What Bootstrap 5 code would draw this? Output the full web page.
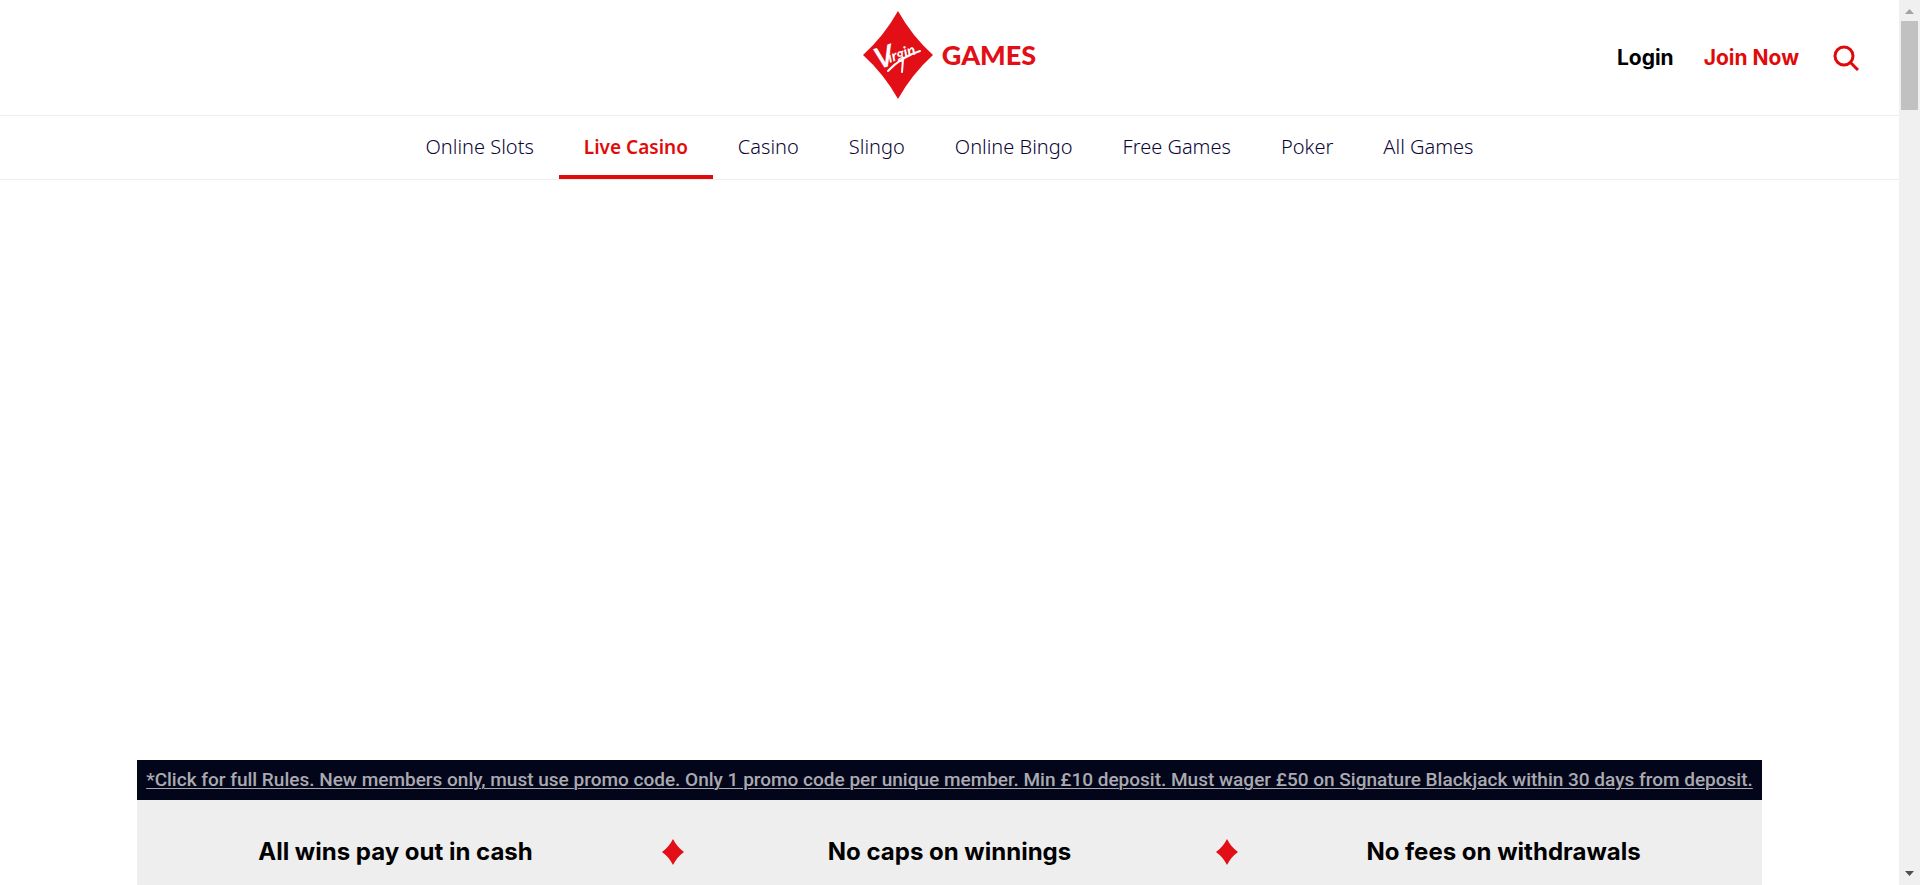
<!DOCTYPE html>
<html lang="en">
<head>
<meta charset="utf-8">
<meta name="viewport" content="width=device-width, initial-scale=1">
<title>Live Casino | Virgin Games</title>
<link href="https://cdn.jsdelivr.net/npm/bootstrap@5.3.0/dist/css/bootstrap.min.css" rel="stylesheet">
<style>
  :root { --brand: #e10a0a; --ink: #0c0636; --line: #eee; }
  body { font-family: "Noto Sans", "Open Sans", sans-serif; color: #000; background: #fff; }
  a { text-decoration: none; }

  .top-bar { min-height: 116px; padding: 0 40px; border-bottom: 1px solid var(--line); }
  .brand-link { padding-bottom: 5px; }
  .brand-mark { width: 70px; height: 88px; }
  .brand-name { padding-left: 9px; font: 900 27px/36px Lato, sans-serif; color: #e20f17; }
  .brand-script { font-family: Lato, sans-serif; font-style: italic; font-weight: 700; fill: #fff; }
  .account { gap: 30px; font: 700 21px/28px Inter, sans-serif; }
  .account a { color: #000; }
  .account .join { color: var(--brand); }
  .search-btn { width: 26px; height: 26px; }

  .game-nav { min-height: 64px; border-bottom: 1px solid var(--line); }
  .game-nav a { display: block; padding: 17px 25px 14px; border-bottom: 4px solid transparent;
    font-size: 20px; line-height: 28px; font-weight: 300; color: var(--ink); }
  .game-nav a.active { font-size: 19px; font-weight: 600; color: var(--brand); border-bottom-color: var(--brand); }

  .hero-space { height: 580px; }
  .promo { max-width: 1625px; }
  .terms { background: #03061a; padding: 6px 4px; text-align: center; }
  .terms a { color: #aaaab0; font: 500 19px/28px Roboto, sans-serif;
    text-decoration: underline; text-decoration-thickness: 1px; text-underline-offset: 2px; }
  .benefits { background: #eee; min-height: 104px; font: 700 24px/32px Inter, sans-serif; }
  .benefit-gem { width: 37px; }

  .scroll-rail { width: 21px; background: #f0f0f0; }
  .scroll-thumb { width: 17px; height: 89px; background: #c1c1c1; }
  .rail-arrow { height: 21px; }
</style>
<script src="https://cdn.jsdelivr.net/npm/bootstrap@5.3.0/dist/js/bootstrap.bundle.min.js"></script>
</head>
<body class="d-flex vh-100 overflow-hidden">
<div class="flex-grow-1 overflow-hidden">
  <header class="top-bar row g-0 align-items-center">
    <div class="col"></div>
    <a href="#" class="brand-link col-auto d-flex align-items-center" aria-label="Virgin Games">
      <svg class="brand-mark" viewBox="0 0 70 88" aria-hidden="true">
        <path fill="#e20f17" d="M35 0Q49 25 70 44Q49 63 35 88Q21 63 0 44Q21 25 35 0Z"/>
        <g class="brand-script" transform="rotate(-18 20 57)">
          <text x="15" y="57" font-size="29">V</text>
          <text x="28" y="54" font-size="15">irgin</text>
        </g>
        <path fill="none" stroke="#fff" stroke-width="2" stroke-linecap="round" d="M25 60Q38 46 57 40M40 48L39 61"/>
      </svg>
      <span class="brand-name">GAMES</span>
    </a>
    <div class="account col d-flex justify-content-end align-items-center">
      <a href="#">Login</a>
      <a href="#" class="join">Join Now</a>
      <button type="button" class="search-btn btn p-0 border-0 ms-1 d-flex" aria-label="Search">
        <svg width="26" height="26" viewBox="0 0 26 26" fill="none" stroke="#e10a0a" stroke-width="3"><circle cx="11" cy="11" r="9"/><path d="M17.500 17.500L25 25"/></svg>
      </button>
    </div>
  </header>

  <nav class="game-nav d-flex justify-content-center" aria-label="Games">
    <a href="#">Online Slots</a>
    <a href="#" class="active" aria-current="page">Live Casino</a>
    <a href="#">Casino</a>
    <a href="#">Slingo</a>
    <a href="#">Online Bingo</a>
    <a href="#">Free Games</a>
    <a href="#">Poker</a>
    <a href="#">All Games</a>
  </nav>

  <main>
    <div class="hero-space"></div>
    <section class="promo mx-auto">
      <div class="terms"><a href="#">*Click for full Rules. New members only, must use promo code. Only 1 promo code per unique member. Min £10 deposit. Must wager £50 on Signature Blackjack within 30 days from deposit.</a></div>
      <div class="benefits row g-0 align-items-center text-center">
        <div class="col">All wins pay out in cash</div>
        <div class="benefit-gem"><svg width="22" height="26" viewBox="0 0 22 26" class="d-block mx-auto"><path fill="#e20f17" d="M11 0Q15 8 22 13Q15 18 11 26Q7 18 0 13Q7 8 11 0Z"/></svg></div>
        <div class="col">No caps on winnings</div>
        <div class="benefit-gem"><svg width="22" height="26" viewBox="0 0 22 26" class="d-block mx-auto"><path fill="#e20f17" d="M11 0Q15 8 22 13Q15 18 11 26Q7 18 0 13Q7 8 11 0Z"/></svg></div>
        <div class="col">No fees on withdrawals</div>
      </div>
    </section>
  </main>
</div>

<div class="scroll-rail flex-shrink-0 d-flex flex-column align-items-center" aria-hidden="true">
  <svg class="rail-arrow" width="9" viewBox="0 0 9 21"><path fill="#a3a3a3" d="M0 14L4.500 9L9 14Z"/></svg>
  <div class="scroll-thumb"></div>
  <svg class="rail-arrow mt-auto" width="9" viewBox="0 0 9 21"><path fill="#505050" d="M0 7L4.500 12L9 7Z"/></svg>
</div>
</body>
</html>
